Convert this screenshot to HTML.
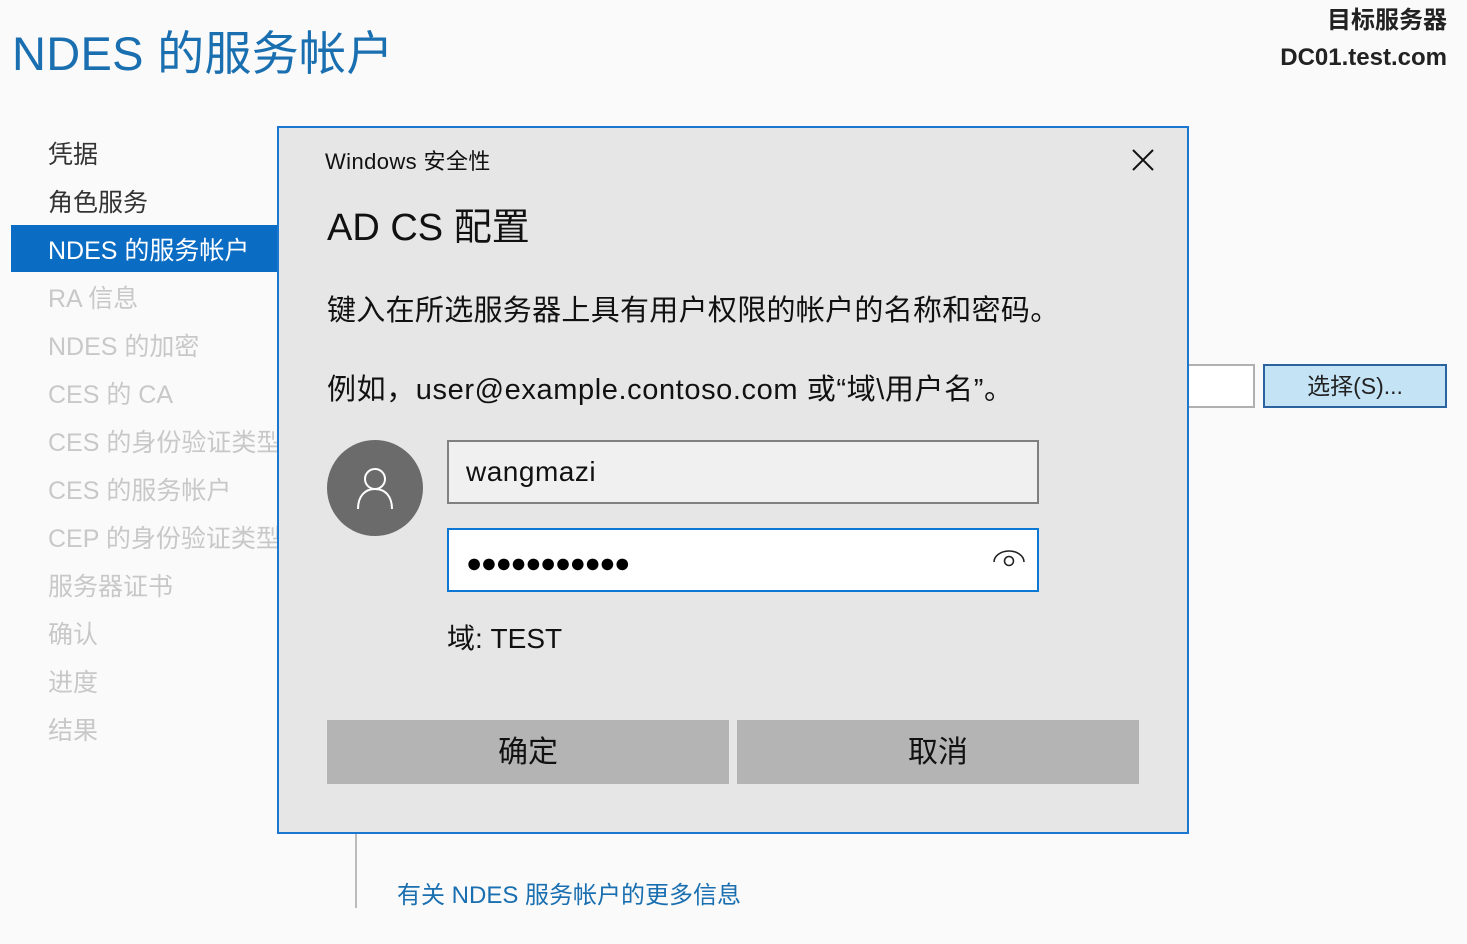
<!DOCTYPE html>
<html><head><meta charset="utf-8"><style>
*{margin:0;padding:0;box-sizing:border-box}
body{width:1467px;height:944px;background:#fafafa;position:relative;overflow:hidden;font-family:"Liberation Sans","Noto Sans CJK SC",sans-serif}
.a{position:absolute;white-space:nowrap}
.nav{font-size:25px;color:#c8c8c8;left:48px}
</style></head><body>
<div class="a" style="left:12px;top:15px;font-size:47px;color:#1a6fb0;letter-spacing:0.3px">NDES 的服务帐户</div>
<div class="a" style="right:20px;top:2px;font-size:24px;font-weight:bold;color:#222;text-align:right;line-height:37px">目标服务器<br>DC01.test.com</div>
<div class="a nav" style="top:135px;color:#333">凭据</div>
<div class="a nav" style="top:183px;color:#333">角色服务</div>
<div class="a" style="left:11px;top:225px;width:270px;height:47px;background:#0b6cc4"></div>
<div class="a nav" style="top:231px;color:#fff">NDES 的服务帐户</div>
<div class="a nav" style="top:279px">RA 信息</div>
<div class="a nav" style="top:327px">NDES 的加密</div>
<div class="a nav" style="top:375px">CES 的 CA</div>
<div class="a nav" style="top:423px">CES 的身份验证类型</div>
<div class="a nav" style="top:471px">CES 的服务帐户</div>
<div class="a nav" style="top:519px">CEP 的身份验证类型</div>
<div class="a nav" style="top:567px">服务器证书</div>
<div class="a nav" style="top:615px">确认</div>
<div class="a nav" style="top:663px">进度</div>
<div class="a nav" style="top:711px">结果</div>
<div class="a" style="left:355px;top:832px;width:2px;height:76px;background:#bbb"></div>
<div class="a" style="left:397px;top:875px;font-size:24px;color:#1a6fb0">有关 NDES 服务帐户的更多信息</div>
<div class="a" style="left:1180px;top:364px;width:75px;height:44px;background:#fff;border:2px solid #b0b0b0"></div>
<div class="a" style="left:1263px;top:364px;width:184px;height:44px;background:#c4e4f6;border:2px solid #2a64a0;font-size:23px;color:#222;text-align:center;line-height:40px">选择(S)...</div>
<div class="a" style="left:277px;top:126px;width:912px;height:708px;background:#e6e6e6;border:2px solid #1a78d0"></div>
<div class="a" style="left:325px;top:144px;font-size:22px;color:#111;letter-spacing:0.4px">Windows 安全性</div>
<svg class="a" style="left:1132px;top:149px" width="22" height="22"><path d="M1 1L21 21M21 1L1 21" stroke="#111" stroke-width="2"/></svg>
<div class="a" style="left:327px;top:196px;font-size:38px;color:#111">AD CS 配置</div>
<div class="a" style="left:327px;top:287px;font-size:29px;color:#111;letter-spacing:0.3px">键入在所选服务器上具有用户权限的帐户的名称和密码。</div>
<div class="a" style="left:327px;top:366px;font-size:29px;color:#111;letter-spacing:0.6px">例如，user@example.contoso.com 或“域\用户名”。</div>
<div class="a" style="left:327px;top:440px;width:96px;height:96px;border-radius:50%;background:#6b6b6b"></div>
<svg class="a" style="left:355px;top:466px" width="40" height="44"><circle cx="20" cy="13" r="10" fill="none" stroke="#fff" stroke-width="2"/><path d="M3 43C3 30 10 23 20 23S37 30 37 43" fill="none" stroke="#fff" stroke-width="2"/></svg>
<div class="a" style="left:447px;top:440px;width:592px;height:64px;background:#f0f0f0;border:2px solid #808080;font-size:28px;color:#111;padding:14px 0 0 17px;letter-spacing:0.5px">wangmazi</div>
<div class="a" style="left:447px;top:528px;width:592px;height:64px;background:#fff;border:2px solid #0a78d4;font-size:27px;color:#000;padding:18px 0 0 17px;letter-spacing:-1.5px">●●●●●●●●●●●</div>
<svg class="a" style="left:991px;top:548px" width="36" height="22"><path d="M3 14A15 11 0 0 1 33 14" fill="none" stroke="#222" stroke-width="1.6"/><circle cx="18" cy="13" r="4.5" fill="none" stroke="#222" stroke-width="1.6"/></svg>
<div class="a" style="left:447px;top:617px;font-size:28px;color:#111">域: TEST</div>
<div class="a" style="left:327px;top:720px;width:402px;height:64px;background:#b4b4b4;font-size:30px;color:#111;text-align:center;line-height:66px">确定</div>
<div class="a" style="left:737px;top:720px;width:402px;height:64px;background:#b4b4b4;font-size:30px;color:#111;text-align:center;line-height:66px">取消</div>
</body></html>
